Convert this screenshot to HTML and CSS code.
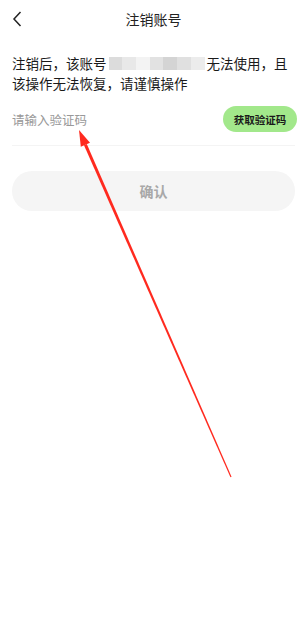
FILE: index.html
```html
<html><head><meta charset="UTF-8">
<meta name="viewport" content="width=device-width, initial-scale=1.0">
<title>注销账号</title>
<link rel="stylesheet" href="styles.css">
</head>
<body>
    <div class="page">
        <div class="header">
            <button class="back">
                <svg width="10" height="16" viewBox="0 0 10 16" fill="none" xmlns="http://www.w3.org/2000/svg">
                    <path d="M8.5 1L2 8L8.5 15" stroke="currentColor" stroke-width="1.5"/>
                </svg>
            </button>
            <div class="title">注销账号</div>
            <div></div>
        </div>

        <p class="notice">注销后，该账号<span class="masked"><i></i><i></i><i></i><i></i><i></i><i></i><i></i></span>无法使用，且该操作无法恢复，请谨慎操作</p>

        <div class="code-row">
            <input class="code-input" type="text" placeholder="请输入验证码">
            <button class="code-button">获取验证码</button>
        </div>

        <button class="confirm-button">确认</button>
    </div>

    <!-- annotation arrow drawn over the screenshot -->
    <svg class="arrow" width="307" height="640" viewBox="0 0 307 640" xmlns="http://www.w3.org/2000/svg">
        <polygon points="84.0,145.3 86.8,144.1 231.55,476.76 230.45,477.24" fill="#ff2a1f"/>
        <polygon points="79,130 80.8,146.7 90.0,142.7" fill="#ff2a1f"/>
    </svg>
</body>
</html>
```

FILE: styles.css
```css
:root {
    --text-color: #1a1a1a;
    --muted-color: #999999;
    --line-color: #f4f4f4;
    --green: #a2e88b;
}

body {
    font-family: "Noto Sans CJK SC", "Noto Sans", sans-serif;
    background-color: #FFFFFF;
    margin: 0;
    padding: 0;
    position: relative;
    height: 640px;
    color: var(--text-color);
}

.page {
    padding: 0 12px;
}

.header {
    display: grid;
    grid-template-columns: 40px 1fr 40px;
    align-items: center;
    height: 38px;
}

.back {
    background: none;
    border: none;
    padding: 0;
    color: #222222;
    display: flex;
    align-items: center;
    height: 38px;
    cursor: pointer;
}

.title {
    text-align: center;
    font-size: 14px;
    color: #222222;
}

.notice {
    margin: 15px 0 0;
    font-size: 13.5px;
    line-height: 20px;
    color: var(--text-color);
}

.masked {
    display: inline-flex;
    vertical-align: top;
    width: 100px;
    height: 20px;
    align-items: center;
    padding: 0 2px;
    box-sizing: border-box;
}

.masked i {
    flex: 1;
    height: 13px;
    background: #dcdcdc;
}

.masked i:nth-child(2) { background: #e8e8e8; }
.masked i:nth-child(3) { background: #f3f3f3; }
.masked i:nth-child(4) { background: #e2e2e2; }
.masked i:nth-child(5) { background: #d4d4d4; }
.masked i:nth-child(6) { background: #e0e0e0; }
.masked i:nth-child(7) { background: #ececec; }

.code-row {
    display: flex;
    align-items: center;
    justify-content: space-between;
    height: 52px;
    border-bottom: 1px solid var(--line-color);
}

.code-input {
    border: none;
    outline: none;
    padding: 0;
    font-family: inherit;
    font-size: 12.5px;
    color: var(--text-color);
    width: 150px;
}

.code-input::placeholder {
    color: var(--muted-color);
}

.code-button {
    background-color: var(--green);
    border: none;
    border-radius: 13px;
    height: 26px;
    width: 74px;
    margin-right: -2px;
    font-family: inherit;
    font-size: 10.5px;
    font-weight: 700;
    color: var(--text-color);
    padding: 0;
    cursor: pointer;
}

.confirm-button {
    display: block;
    width: 100%;
    margin-top: 25px;
    height: 40px;
    border: none;
    border-radius: 20px;
    background-color: #f5f5f5;
    font-family: inherit;
    font-size: 14px;
    font-weight: 700;
    color: #a8a8a8;
    cursor: pointer;
}

.arrow {
    position: absolute;
    left: 0;
    top: 0;
    pointer-events: none;
}
```
